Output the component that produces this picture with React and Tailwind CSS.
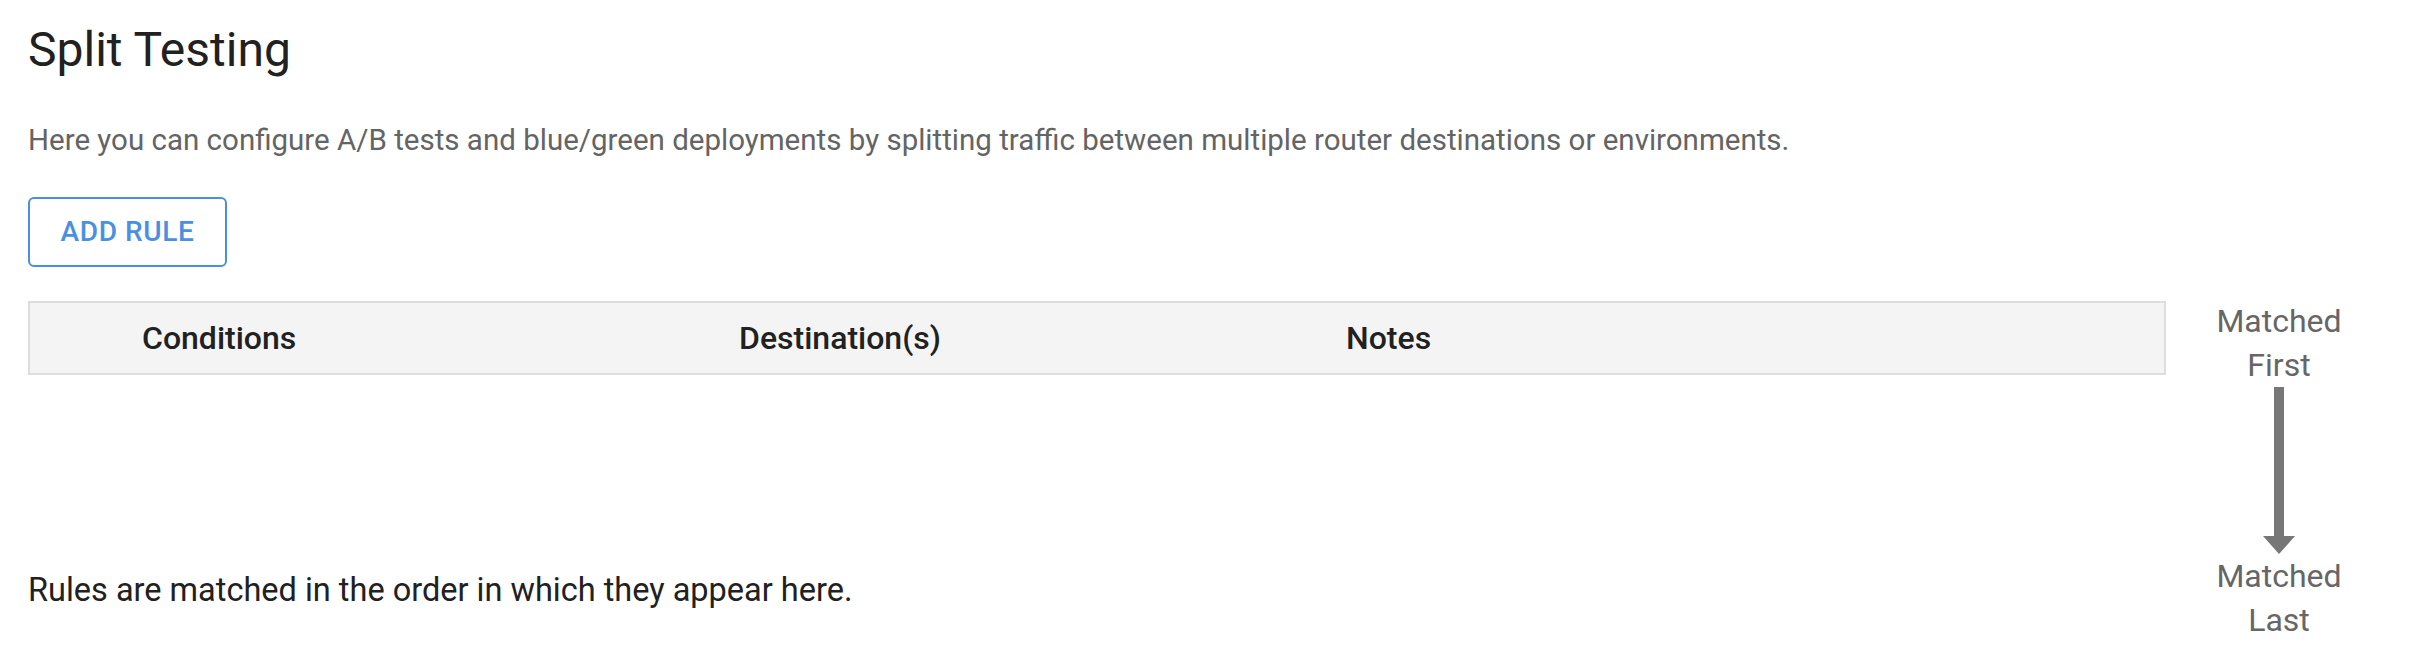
import React from "react";

const font = { fontFamily: "Roboto, 'Liberation Sans', sans-serif" };

function OrderArrow() {
  return (
    <svg width="34" height="167" viewBox="0 0 34 167" className="block">
      <rect x="12" y="0" width="10" height="150" fill="#777777" />
      <polygon points="1,149 33,149 17,167" fill="#777777" />
    </svg>
  );
}

export default function App() {
  return (
    <div className="min-h-[655px] bg-white px-[28px] pt-[22px]" style={font}>
      <h1 className="text-[48px] leading-[56px] font-normal text-[#212121]">
        Split Testing
      </h1>
      <p className="mt-[42px] text-[29.5px] leading-[40px] text-[#646464]">
        Here you can configure A/B tests and blue/green deployments by splitting
        traffic between multiple router destinations or environments.
      </p>
      <div className="mt-[37px]">
        <button className="w-[199px] h-[70px] rounded-[6px] border-[2px] border-[#4a90e2] bg-white text-[28px] font-medium tracking-[0.6px] text-[#4a90e2]">
          ADD RULE
        </button>
      </div>

      <div className="flex mt-[31px]">
        <div className="flex-1 flex flex-col pt-[3px]">
          <div className="h-[74px] border-[2px] border-[#dddddd] bg-[#f4f4f4] flex items-center text-[32px] font-medium text-[#212121]">
            <div className="w-[709px] pl-[112px]">Conditions</div>
            <div className="w-[607px]">Destination(s)</div>
            <div className="flex-1">Notes</div>
          </div>
          <p className="mt-auto mb-[30px] text-[32.5px] leading-[44px] text-[#212121]">
            Rules are matched in the order in which they appear here.
          </p>
        </div>

        <div className="w-[226px] flex flex-col items-center text-center text-[32px] leading-[44px] text-[#666666]">
          <div className="pt-[1px]">
            Matched
            <br />
            First
          </div>
          <div>
            <OrderArrow />
          </div>
          <div>
            Matched
            <br />
            Last
          </div>
        </div>
      </div>
    </div>
  );
}
